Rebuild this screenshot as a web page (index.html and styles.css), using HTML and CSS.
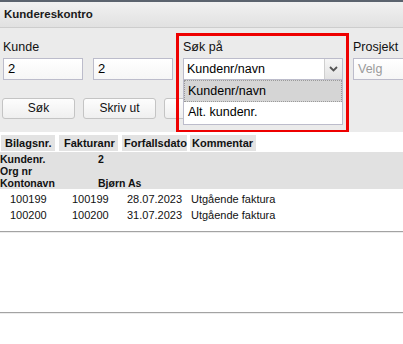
FILE: index.html
```html
<!DOCTYPE html>
<html>
<head>
<meta charset="utf-8">
<link rel="stylesheet" href="styles.css">
</head>
<body>
<div class="topline"></div>
<div class="titlebar">Kundereskontro</div>
<div class="form">
  <div class="fields">
    <div class="field">
      <div class="label">Kunde</div>
      <div class="input">2</div>
    </div>
    <div class="field">
      <div class="label">&nbsp;</div>
      <div class="input">2</div>
    </div>
    <div class="field field-select">
      <div class="label">Søk på</div>
      <div class="select">
        <span class="select-text">Kundenr/navn</span>
        <span class="arrow"><svg width="9" height="6" viewBox="0 0 9 6"><path d="M1 1 L4.5 4.5 L8 1" fill="none" stroke="#555" stroke-width="1.8"/></svg></span>
      </div>
      <div class="dropdown">
        <div class="option option-active">Kundenr/navn</div>
        <div class="option">Alt. kundenr.</div>
      </div>
      <div class="highlight"></div>
    </div>
    <div class="field">
      <div class="label">Prosjekt</div>
      <div class="input input-wide placeholder">Velg</div>
    </div>
  </div>
  <div class="buttons">
    <div class="btn">Søk</div>
    <div class="btn">Skriv ut</div>
    <div class="btn"></div>
  </div>
</div>
<div class="results">
  <div class="thead">
    <div class="th c1">Bilagsnr.</div>
    <div class="th c2">Fakturanr</div>
    <div class="th c3">Forfallsdato</div>
    <div class="th c4">Kommentar</div>
  </div>
  <div class="group">
    <div>Kundenr.</div><div>2</div>
    <div>Org nr</div><div></div>
    <div>Kontonavn</div><div>Bjørn As</div>
  </div>
  <div class="row">
    <div class="d1">100199</div><div>100199</div><div>28.07.2023</div><div>Utgående faktura</div>
  </div>
  <div class="row">
    <div class="d1">100200</div><div>100200</div><div>31.07.2023</div><div>Utgående faktura</div>
  </div>
  <div class="rule rule-first"></div>
  <div class="rule rule-second"></div>
</div>
</body>
</html>
```
FILE: styles.css
```css
* { box-sizing: border-box; }
html, body { margin: 0; padding: 0; }
body {
  width: 403px;
  height: 344px;
  overflow: hidden;
  background: #ffffff;
  font-family: "Liberation Sans", Arial, sans-serif;
  color: #000;
}
.topline { height: 2px; background: #5b636e; }
.titlebar {
  height: 26px;
  background: linear-gradient(#f1f1f1, #e1e1e1);
  border-bottom: 1px solid #cdcdcd;
  font-weight: bold;
  font-size: 11.5px;
  line-height: 25px;
  padding-left: 4px;
  color: #1a1a1a;
}
.form {
  background: #ebebeb;
  height: 104px;
  padding: 12px 0 0 3px;
  overflow: hidden;
  font-size: 12px;
}
.fields { display: flex; gap: 10px; width: 500px; }
.field { display: flex; flex-direction: column; width: 80px; flex: none; }
.field-select { position: relative; width: 160px; }
.label { height: 15px; line-height: 15px; margin-bottom: 3px; font-size: 12.5px; color: #111; }
.input {
  height: 22px;
  border: 1px solid #bcbccb;
  background: linear-gradient(#ffffff, #f6f6f6);
  padding-left: 4px;
  line-height: 20px;
  font-size: 13px;
  color: #000;
}
.input-wide { width: 90px; }
.placeholder { color: #9a9a9a; font-size: 12.5px; }
.select {
  height: 22px;
  border: 1px solid #bcbccb;
  background: #fff;
  display: flex;
  align-items: stretch;
}
.select-text { flex: 1; padding-left: 3px; line-height: 20px; font-size: 12.5px; }
.arrow {
  width: 18px;
  border-left: 1px solid #cfcfcf;
  background: linear-gradient(#f6f6f6, #e2e2e2);
  display: flex;
  align-items: center;
  justify-content: center;
}
.dropdown {
  position: absolute;
  top: 40px;
  left: 0;
  width: 160px;
  border: 1px solid #bcbccb;
  border-top: none;
  background: #fff;
  z-index: 2;
}
.option { height: 22px; line-height: 20px; padding-left: 4px; font-size: 12.5px; }
.option-active { background: #d5d5d5; border: 1px dotted #9a9a9a; padding-left: 3px; }
.highlight {
  position: absolute;
  left: -7px;
  top: -7px;
  width: 173px;
  height: 100px;
  border: 3px solid #ee0000;
  z-index: 3;
}
.buttons { display: flex; gap: 8px; margin-top: 18px; margin-left: -1px; }
.btn {
  width: 73px;
  height: 21px;
  border: 1px solid #c4c4c4;
  border-radius: 3px;
  background: linear-gradient(#fdfdfd, #efefef);
  text-align: center;
  line-height: 19px;
  font-size: 12px;
  color: #111;
}
.results { background: #fff; padding-top: 3px; font-size: 11px; }
.thead { display: flex; height: 16px; margin-bottom: 1px; }
.th {
  background: #e3e3e3;
  font-weight: bold;
  line-height: 16px;
  white-space: nowrap;
  color: #111;
}
.c1 { margin-left: 1px; width: 54px; padding-left: 4px; }
.c2 { margin-left: 4px; width: 59px; padding-left: 5px; }
.c3 { margin-left: 4px; width: 65px; padding-left: 2px; }
.c4 { margin-left: 3px; width: 66px; padding-left: 2px; }
.group {
  background: #e1e1e1;
  display: grid;
  grid-template-columns: 98px auto;
  padding-top: 1px;
  height: 37px;
  font-weight: bold;
  font-size: 10.5px;
  line-height: 12px;
  color: #111;
}
.row {
  display: grid;
  grid-template-columns: 72px 55px 64px auto;
  height: 16px;
  line-height: 16px;
  white-space: nowrap;
  color: #111;
}
.d1 { padding-left: 10px; }
.group + .row { margin-top: 2px; }
.rule { height: 2px; border-top: 1px solid #a3a3a3; border-bottom: 1px solid #ececec; }
.rule-first { margin-top: 8px; }
.rule-second { margin-top: 79px; }
```
